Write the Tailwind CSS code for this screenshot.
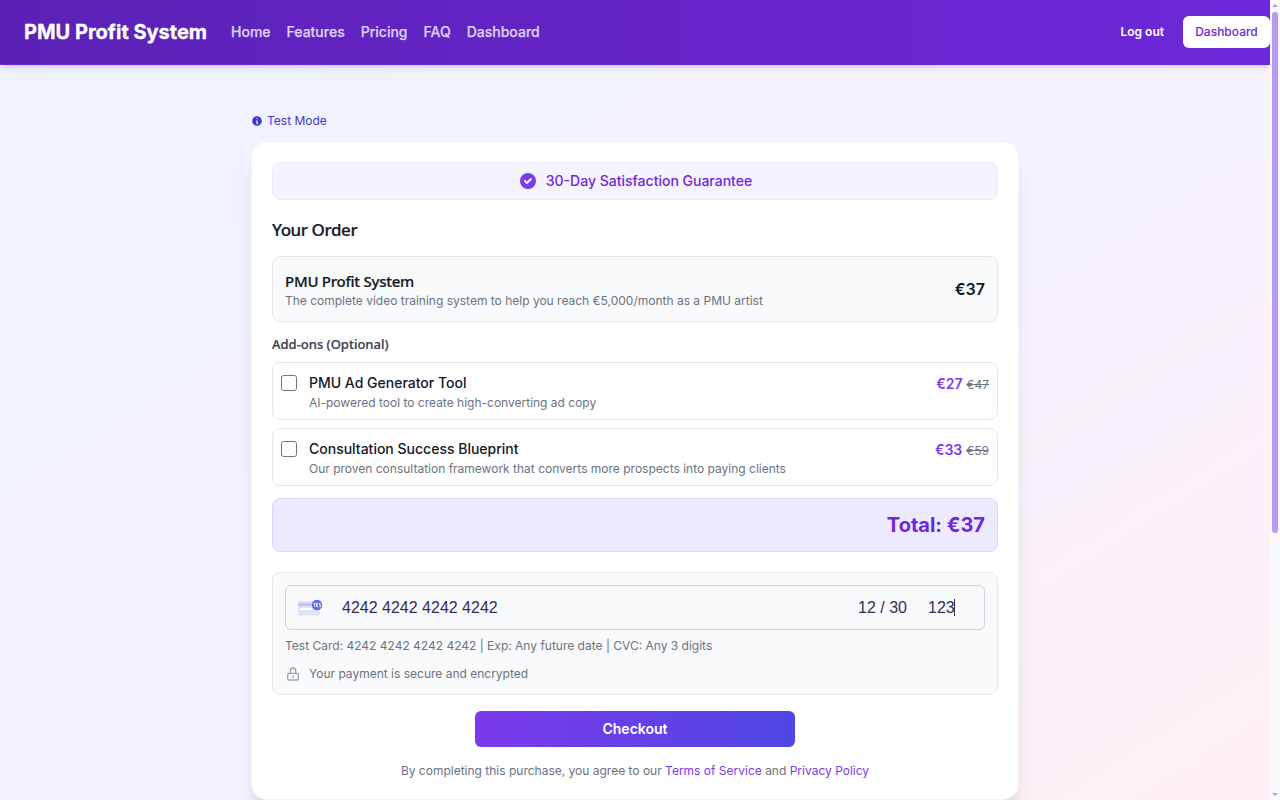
<!DOCTYPE html>
<html lang="en">
<head>
<meta charset="utf-8">
<title>PMU Profit System</title>
<script src="https://cdn.jsdelivr.net/npm/@tailwindcss/browser@4"></script>
</head>
<body class="flex h-[800px] w-[1280px] overflow-hidden font-['Inter',sans-serif]">
<div class="flex h-[800px] w-[1270px] shrink-0 flex-col overflow-hidden bg-linear-to-br/srgb from-[#edf3ff] via-[#f5f3ff] to-[#fff0f6]">
  <header class="z-10 flex h-[65px] w-full shrink-0 items-center border-b border-[#6d28d9] bg-linear-to-r/srgb from-[#5b21b6] to-[#6d28d9] pl-6 shadow-md">
    <span class="w-[207px] whitespace-nowrap text-xl font-bold text-white [-webkit-text-stroke:0.3px_currentColor]">PMU Profit System</span>
    <nav class="flex gap-4 text-sm font-medium text-[#ddd0f8] [-webkit-text-stroke:0.25px_currentColor]">
      <a>Home</a><a>Features</a><a>Pricing</a><a>FAQ</a><a>Dashboard</a>
    </nav>
    <a class="ml-auto text-xs font-semibold text-white">Log out</a>
    <a class="ml-[19px] flex h-8 w-[87px] items-center justify-center rounded-md bg-white text-xs font-medium text-[#6d28d9]">Dashboard</a>
  </header>
  <main class="mx-auto flex w-[768px] flex-col pt-12">
    <div class="flex h-4 items-center gap-1 text-xs text-[#4338ca]">
      <svg class="size-3" viewBox="0 0 20 20" fill="currentColor"><path fill-rule="evenodd" clip-rule="evenodd" d="M18 10a8 8 0 11-16 0 8 8 0 0116 0zm-7-4a1 1 0 11-2 0 1 1 0 012 0zM9 9a1 1 0 000 2v3a1 1 0 001 1h1a1 1 0 100-2v-3a1 1 0 00-1-1H9z"/></svg>
      <span>Test Mode</span>
    </div>
    <section class="mt-3 h-[659px] rounded-2xl border border-[#f3f4f6] bg-white p-5 shadow-xl">
      <div class="flex h-[38px] items-center justify-center gap-2 rounded-lg border border-[#ede9fe] bg-[#f5f3ff] text-sm font-medium text-[#6d28d9]">
        <svg class="size-5 text-[#7c3aed]" viewBox="0 0 20 20" fill="currentColor"><path fill-rule="evenodd" clip-rule="evenodd" d="M10 18a8 8 0 100-16 8 8 0 000 16zm3.707-9.293a1 1 0 00-1.414-1.414L9 10.586 7.707 9.293a1 1 0 00-1.414 1.414l2 2a1 1 0 001.414 0l4-4z"/></svg>
        <span>30-Day Satisfaction Guarantee</span>
      </div>
      <h2 class="mt-4 font-['Noto_Sans',sans-serif] text-[17px] leading-7 font-medium tracking-[-0.025em] text-[#111827] [-webkit-text-stroke:0.2px_currentColor]">Your Order</h2>
      <div class="mt-3 flex h-[66px] items-center justify-between rounded-lg border border-[#e5e7eb] bg-[#f9fafb] px-3">
        <div>
          <h3 class="h-6 font-['Noto_Sans',sans-serif] text-[15px] leading-6 font-medium tracking-[-0.017em] text-[#111827] [-webkit-text-stroke:0.2px_currentColor]">PMU Profit System</h3>
          <p class="text-xs text-[#6b7280]">The complete video training system to help you reach €5,000/month as a PMU artist</p>
        </div>
        <span class="text-base font-semibold text-[#111827]">€37</span>
      </div>
      <h3 class="mt-3 font-['Noto_Sans',sans-serif] text-[13px] leading-5 font-medium text-[#374151] [-webkit-text-stroke:0.2px_currentColor]">Add-ons (Optional)</h3>
      <div class="mt-2 flex flex-col gap-2">
        <div class="flex h-[58px] rounded-lg border border-[#e5e7eb] p-2">
          <span class="mt-1 size-4 rounded-[2.5px] border border-[#767676] bg-white"></span>
          <div class="ml-3 flex-1"><p class="mt-0.5 text-sm leading-5 font-medium text-[#111827]">PMU Ad Generator Tool</p><p class="mt-0.5 text-xs text-[#6b7280]">AI-powered tool to create high-converting ad copy</p></div>
          <div><span class="text-sm font-semibold text-[#7c3aed]">€27</span><span class="ml-1 text-xs text-[#6b7280] line-through">€47</span></div>
        </div>
        <div class="flex h-[58px] rounded-lg border border-[#e5e7eb] p-2">
          <span class="mt-1 size-4 rounded-[2.5px] border border-[#767676] bg-white"></span>
          <div class="ml-3 flex-1"><p class="mt-0.5 text-sm leading-5 font-medium text-[#111827]">Consultation Success Blueprint</p><p class="mt-0.5 text-xs text-[#6b7280]">Our proven consultation framework that converts more prospects into paying clients</p></div>
          <div><span class="text-sm font-semibold text-[#7c3aed]">€33</span><span class="ml-1 text-xs text-[#6b7280] line-through">€59</span></div>
        </div>
      </div>
      <div class="mt-3 flex h-[54px] items-center justify-end rounded-lg border border-[#ddd6fe] bg-[#ede9fe] px-3 text-xl font-bold text-[#6d28d9]">Total: €37</div>
      <div class="mt-5 h-[123px] rounded-lg border border-[#e5e7eb] bg-[#f9fafb] p-3">
        <div class="flex h-[45px] items-center rounded-md border border-[#d1d5db] pl-3 font-['Liberation_Sans',sans-serif] text-base text-[#312e5c]">
          <svg class="h-4 w-6" viewBox="0 0 24 16"><rect y="1" width="22" height="14.5" rx="1.5" fill="#e0e2fb"/><rect y="3" width="22" height="3" fill="#bfc2f5"/><rect x="2" y="8" width="12" height="2" fill="#fff"/><circle cx="19" cy="5" r="5.2" fill="#6269e3"/><path d="M15.5 3.4h2.2M16.6 3.4v3.4M20 3.4h-1.5v3.3H20M18.5 5H20M22.6 3.4h-1.3v1.7h1.3v1.6h-1.3" stroke="#fff" stroke-width=".9" fill="none"/></svg>
          <span class="ml-5">4242 4242 4242 4242</span>
          <span class="ml-auto">12 / 30</span>
          <span class="ml-[21px] flex w-14 items-center">123<i class="-ml-[0.5px] h-[17px] w-px bg-[#312e5c]"></i></span>
        </div>
        <p class="mt-2 text-xs text-[#6b7280]">Test Card: 4242 4242 4242 4242 | Exp: Any future date | CVC: Any 3 digits</p>
        <div class="mt-3 flex h-4 items-center gap-2 text-xs text-[#6b7280]">
          <svg class="size-4 text-[#9ca3af]" viewBox="0 0 24 24" fill="none" stroke="currentColor" stroke-width="2" stroke-linecap="round" stroke-linejoin="round"><path d="M12 15v2m-6 4h12a2 2 0 002-2v-6a2 2 0 00-2-2H6a2 2 0 00-2 2v6a2 2 0 002 2zm10-10V7a4 4 0 00-8 0v4h8z"/></svg>
          <span>Your payment is secure and encrypted</span>
        </div>
      </div>
      <button class="mx-auto mt-4 flex h-9 w-80 items-center justify-center rounded-md bg-linear-to-r/srgb from-[#7c3aed] to-[#4f46e5] text-sm font-semibold text-white">Checkout</button>
      <p class="mt-4 text-center text-xs text-[#6b7280]">By completing this purchase, you agree to our <a class="text-[#7c3aed]">Terms of Service</a> and <a class="text-[#7c3aed]">Privacy Policy</a></p>
    </section>
  </main>
</div>
<aside class="flex w-2.5 flex-col items-center bg-[#f9fafb]">
  <svg class="mt-1 h-[3px] w-1.5" viewBox="0 0 6 3" fill="#b99af5"><path d="M0 3 3 0l3 3z"/></svg>
  <div class="mt-[5px] h-[521px] w-1.5 rounded-full bg-[#b99af5]"></div>
  <svg class="mt-auto mb-1 h-[3px] w-1.5" viewBox="0 0 6 3" fill="#b99af5"><path d="M0 0h6L3 3z"/></svg>
</aside>
</body>
</html>
